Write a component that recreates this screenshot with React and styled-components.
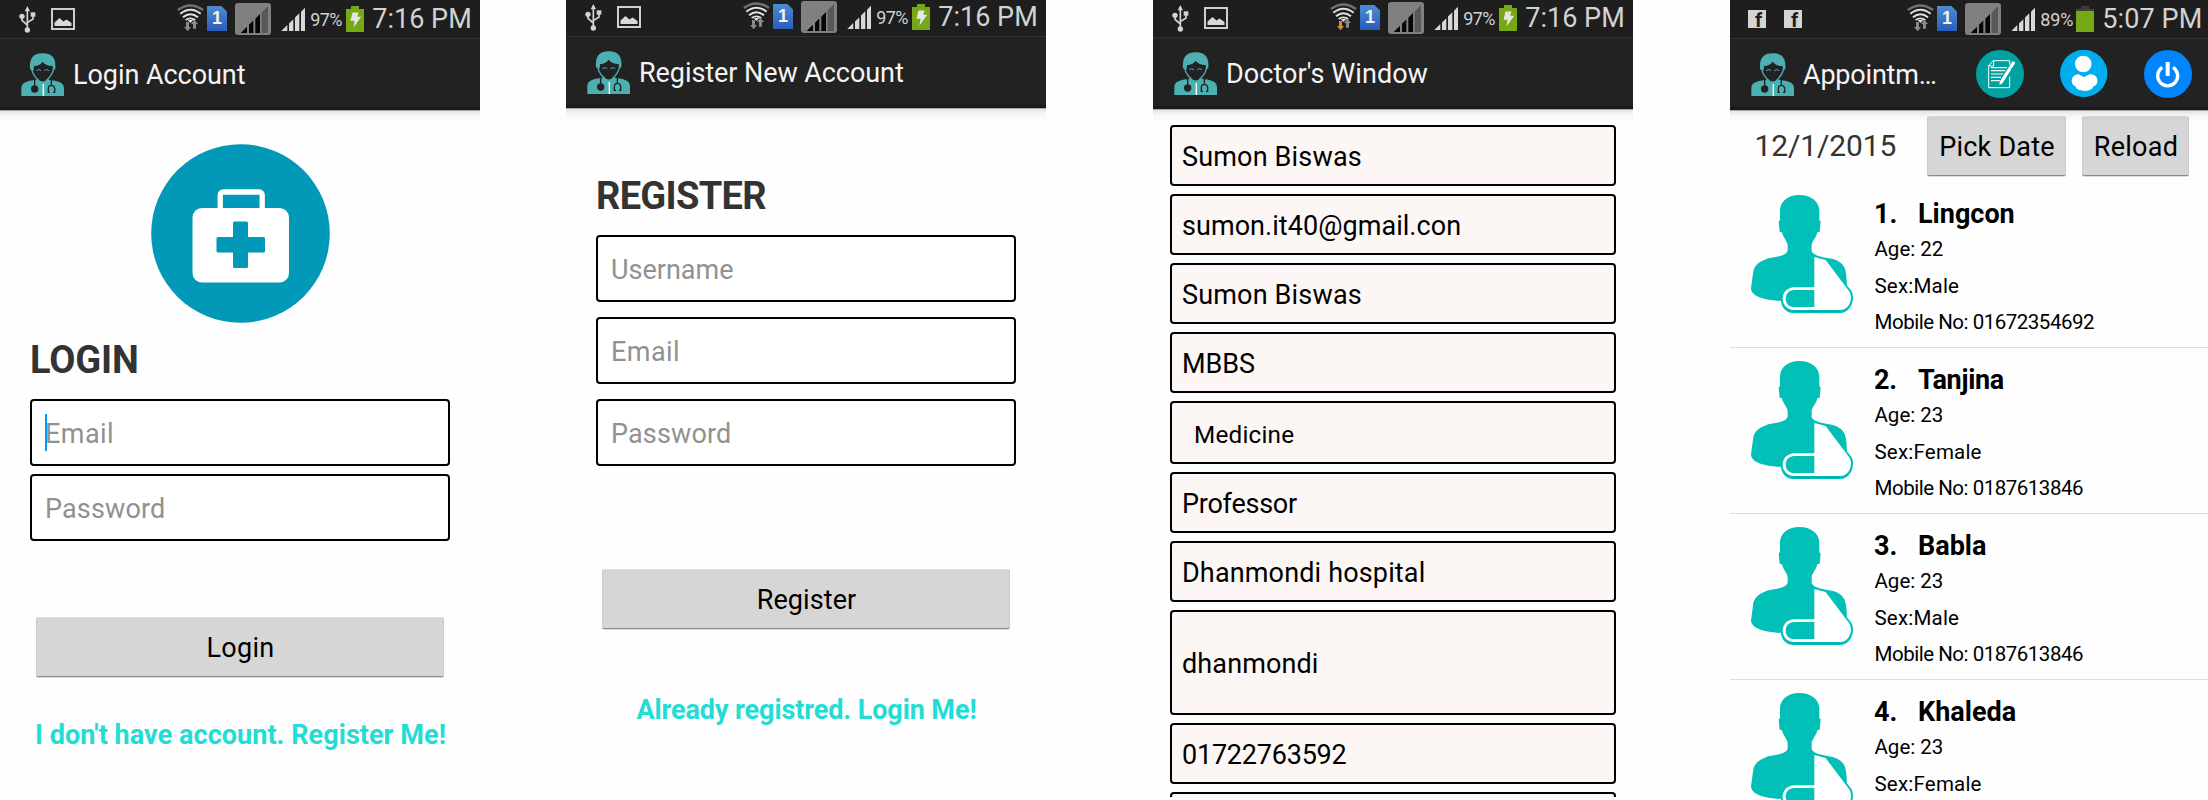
import React from 'react';
import styled, { createGlobalStyle } from 'styled-components';

const GlobalStyle = createGlobalStyle`
  body {
    margin: 0;
    background: #fefefe;
    font-family: Roboto, "Liberation Sans", sans-serif;
    color: #000;
  }
  * { box-sizing: border-box; }
`;

const Board = styled.main`
  display: grid;
  grid-template-columns: 480px 86px 480px 107px 480px 97px 478px;
  width: 2208px;
  height: 800px;
  overflow: hidden;
`;

const Screen = styled.section`
  grid-column: ${(p) => p.$column};
  height: ${(p) => p.$height || 800}px;
  overflow: hidden;
  background: #fefefe;
`;

const Header = styled.header`
  position: relative;
  z-index: 1;
  width: 480px;
  height: 110px;
  margin-top: ${(p) => -(p.$crop || 0)}px;
  background: #222;
  color: #f4f4f4;

  &::after {
    content: "";
    position: absolute;
    top: 100%;
    left: 0;
    right: 0;
    height: 13px;
    background: linear-gradient(#a8a8a8 0 1px, rgba(0, 0, 0, 0.1) 1px, rgba(0, 0, 0, 0.03) 6px, transparent);
  }
`;

const StatusBar = styled.div`
  display: flex;
  align-items: flex-start;
  height: 39px;
  padding-left: 19px;
  background: #1e1e1e;
  border-bottom: 1px solid #303030;
`;

const Notices = styled.div`
  display: flex;
  width: 158px;
`;

const Glyph = styled.svg`
  display: block;
  flex: none;
  margin-left: ${(p) => p.$gap || 0}px;
  margin-top: ${(p) => p.$top || 0}px;
`;

const SimBadge = styled.span`
  width: 20px;
  height: 25px;
  margin: 6px 0 0 3px;
  background: linear-gradient(#4b8dd0, #2b5cba);
  clip-path: polygon(0 0, 72% 0, 100% 22%, 100% 100%, 0 100%);
  color: #f2f2f2;
  font: bold 18px/25px "Liberation Sans", sans-serif;
  text-align: center;
`;

const Percent = styled.span`
  width: 36px;
  margin-left: 5px;
  color: #d2d2d2;
  font-size: 18px;
  line-height: 40px;
  letter-spacing: ${(p) => p.$ls}px;
`;

const Clock = styled.span`
  margin-left: 8px;
  color: #d2d2d2;
  font-size: 27px;
  line-height: 38px;
  white-space: nowrap;
  letter-spacing: ${(p) => p.$ls}px;
`;

const FacebookNotice = styled.span`
  width: 18px;
  height: 18px;
  margin: 10px 18px 0 0;
  background: #d4d4d4;
  color: #1e1e1e;
  font: bold 20px/20px Roboto, "Liberation Sans", sans-serif;
  text-align: center;
  padding-left: 3px;

  &:first-child { margin-left: -1px; }
`;

const AppBar = styled.div`
  display: flex;
  align-items: center;
  height: 71px;
  padding: 0 0 0 21.3px;
  border-bottom: 3px solid #1a1a1a;
`;

const Title = styled.h1`
  margin: 3px 0 0 8.2px;
  font-size: 27px;
  font-weight: 400;
  line-height: 32px;
  white-space: nowrap;
  letter-spacing: ${(p) => p.$ls || 0}px;
`;

const Actions = styled.nav`
  display: flex;
  gap: 36px;
  margin: 2px 0 0 auto;
  padding-right: 18.5px;
`;

const Form = styled.form`
  display: flex;
  flex-direction: column;
  align-items: stretch;
  padding: ${(p) => p.$top}px 30px 0;
`;

const Logo = styled.svg`
  width: 179px;
  height: 179px;
  margin: 0 0 14px 120.5px;
`;

const Heading = styled.h2`
  margin: 0 0 16px;
  color: #333;
  font-size: 38px;
  font-weight: 700;
  line-height: 46px;
  letter-spacing: ${(p) => p.$ls}px;
`;

const Inputs = styled.div`
  display: grid;
  gap: ${(p) => p.$gap}px;
`;

const Input = styled.div`
  display: flex;
  align-items: center;
  height: 67px;
  padding: 3px 13px 0;
  border: 2px solid #000;
  border-radius: 4px;
  background: #fff;
  color: #919191;
  font-size: 27px;
  letter-spacing: ${(p) => p.$ls || 0}px;
`;

const Caret = styled.i`
  width: 2px;
  height: 37px;
  margin: -3px -2px 0 0;
  background: #0097ff;
`;

const Button = styled.button`
  height: 60px;
  margin: ${(p) => p.$margin || 0};
  padding: 1px 0 0 1px;
  width: ${(p) => p.$width || 'auto'};
  border: 1px solid #cacaca;
  border-top-color: #e0e0e0;
  border-bottom: 1px solid #8a8a8a;
  border-radius: 2px;
  background: #d6d6d6;
  box-shadow: 0 1px 0 #ddd;
  color: #000;
  font: 400 27px Roboto, "Liberation Sans", sans-serif;
  letter-spacing: ${(p) => p.$ls || 0}px;
`;

const Link = styled.a`
  margin-top: ${(p) => p.$top}px;
  margin-left: -9px;
  margin-right: -10px;
  color: #22dcd5;
  font-size: 27px;
  font-weight: 700;
  line-height: 32px;
  text-align: center;
  white-space: nowrap;
  letter-spacing: ${(p) => p.$ls}px;
`;

const Profile = styled.div`
  display: grid;
  gap: 8px;
  padding: 16px 17px 0;
`;

const Field = styled.div`
  display: flex;
  align-items: center;
  height: ${(p) => p.$height || 61}px;
  padding: 3px 0 0 ${(p) => (p.$small ? 22 : 10)}px;
  border: 2px solid #000;
  border-radius: 4px;
  background: #fcf6f4;
  font-size: ${(p) => (p.$small ? 24.3 : 27)}px;
  letter-spacing: ${(p) => p.$ls || 0}px;
`;

const DateBar = styled.div`
  display: flex;
  height: 72px;
  padding: 6px 0 0 24.5px;
`;

const DateText = styled.span`
  width: 172.5px;
  color: #333;
  font-size: 30px;
  line-height: 60px;
  letter-spacing: -0.1px;
`;

const Row = styled.article`
  display: flex;
  height: 166px;
  padding: 13px 0 0 21px;
  border-bottom: 1px solid #dedede;
`;

const Details = styled.div`
  margin: 3px 0 0 21px;
`;

const Name = styled.h3`
  display: flex;
  margin: 0 0 1px;
  font-size: 27px;
  font-weight: 700;
  line-height: 32px;
  letter-spacing: ${(p) => p.$ls || 0}px;
`;

const Index = styled.span`
  width: 44px;
`;

const Detail = styled.p`
  margin: 0 0 0 0.5px;
  font-size: 20.5px;
  line-height: 36.5px;
  white-space: nowrap;
  letter-spacing: ${(p) => p.$ls || 0}px;
`;

const UsbIcon = () => (
  <Glyph width="17" height="27" viewBox="57 17 51 81" $top={5.7} fill="#d4d4d4">
    <path d="M82 17l-8 16h16z" />
    <path d="M82 30v58M66 50v10l16 14M99 46v10L82 67" fill="none" stroke="#d4d4d4" strokeWidth="5" />
    <circle cx="82" cy="89" r="8" />
    <circle cx="66" cy="48" r="8" />
    <path d="M92 36h14v13H92z" />
  </Glyph>
);

const PictureIcon = () => (
  <Glyph width="24" height="22" viewBox="0 0 24 22" $gap={15} $top={8}>
    <path d="M1 1h22v20H1z" fill="none" stroke="#cfcfcf" strokeWidth="2" />
    <path d="M3.5 18v-3.500l5-4.500 4 3.500 3-2 5 3.500v3z" fill="#d8d8d8" />
  </Glyph>
);

const WifiIcon = ({ down = '#8a8a8a' }) => (
  <Glyph width="27" height="28.700" viewBox="531 10 81 86" $top={3.3}>
    <g fill="none" stroke="#e2e2e2" strokeWidth="6">
      <path d="M534 31Q571 4 609 31" stroke="#727272" strokeWidth="8" />
      <path d="M541 42Q571 18 602 42" />
      <path d="M549 53Q571 34 594 53" />
      <path d="M557 61Q571 51 586 61" strokeWidth="5" />
    </g>
    <path d="M563 61h17l-9 9z" fill="#e2e2e2" />
    <path d="M558 67h9v15h6l-10 13-11-13h6z" fill={down} />
    <path d="M579 87h9V73h6l-11-13-10 13h6z" fill="#8a8a8a" />
  </Glyph>
);

const slantedBar = (x1, x2, left, base, slope) =>
  `${x1},${base} ${x1},${base - (x1 - left) * slope} ${x2},${base - (x2 - left) * slope} ${x2},${base}`;

const DimSignalIcon = () => (
  <Glyph width="36" height="32" viewBox="705 9 108 96" $gap={8} $top={3}>
    <rect x="705" y="9" width="108" height="96" rx="9" fill="#808080" />
    <polygon points={slantedBar(785, 804, 722, 99, 0.98)} fill="#585858" />
    {[[722, 741], [747, 760], [766, 780]].map(([a, b]) => (
      <polygon key={a} points={slantedBar(a, b, 722, 99, 0.98)} fill="#060606" />
    ))}
  </Glyph>
);

const SignalIcon = () => (
  <Glyph width="24.500" height="24" viewBox="842 22 73.500 72" $gap={9.7} $top={7.3}>
    {[[843, 861], [866, 879], [884, 897], [902, 915]].map(([a, b]) => (
      <polygon key={a} points={slantedBar(a, b, 843, 94, 0.98)} fill="#d8d8d8" />
    ))}
  </Glyph>
);

const BatteryIcon = ({ charging }) => (
  <Glyph width="18" height="26" viewBox="0 0 18 26" $top={6}>
    <path d="M5 0h8v3H5z" fill={charging ? '#76a818' : '#3c3c3c'} />
    <path d="M0 3h18v23H0z" fill="#76a818" />
    {!charging && <path d="M0 3h18v2H0z" fill="#3c4a20" />}
    {charging && <path d="M6.500 6.500h6l-1.300 4.300h4L7.500 21.500l1-6.700H4.500z" fill="#e6e6e6" />}
  </Glyph>
);

const DoctorIcon = () => (
  <Glyph width="43.500" height="43.500" viewBox="64 156 130.500 130.500" $top={2.5} fill="#4cafb2">
    <path d="M91 205C89 173 99 157 129 157S170 173 167 205l-7 3-1-13c-14 0-23-4-30-13-7 9-13 12-26 13l-1 14z" />
    <path d="M96 203c2 16 10 26 22 36M162 203c-3 16-11 26-22 36" fill="none" stroke="#4cafb2" strokeWidth="4" />
    <path d="M110 209q7-7 14 0M134 209q7-7 14 0" fill="none" stroke="#4cafb2" strokeWidth="3" />
    <path d="M65 285v-23c0-16 16-22 38-24l12-3q14 13 28 0l12 3c22 2 38 8 38 24v23z" />
    <path d="M131 249v36" stroke="#fff" strokeWidth="4" />
    <circle cx="105" cy="264" r="11" fill="#222" />
    <g fill="none" stroke="#222" strokeWidth="4">
      <path d="M105 237v18M155 237v14" />
      <path d="M151 274h-5v-11q0-10 9-10t10 10v11h-5" />
    </g>
  </Glyph>
);

const NotesAction = () => (
  <Glyph width="48" height="48" viewBox="33 18 144 144">
    <circle cx="105" cy="90" r="72" fill="#00a1a1" />
    <path d="M134 62V50H85L71 65v66h63V98" fill="none" stroke="#fff" strokeWidth="3" />
    <path d="M71 66h15V50" fill="none" stroke="#fff" strokeWidth="3" />
    <path d="M78 71h48M78 80h43M78 90h37M78 100h30M78 110h26" stroke="#fff" strokeWidth="3.500" />
    <path d="M143 51l8 5-38 61-10 7 2-12z" fill="#fff" />
    <path d="M135 73l6 4" stroke="#00a1a1" strokeWidth="2" />
  </Glyph>
);

const UserAction = () => (
  <Glyph width="47.500" height="48" viewBox="285 18 142 144">
    <circle cx="356" cy="88.500" r="71" fill="#00aeef" />
    <circle cx="354.500" cy="60" r="25" fill="#fff" />
    <path d="M340 91l17 8 16-8c16 0 24 8 24 19 0 10-5 15-12 17-3 10-14 14-27 14s-24-4-27-14c-7-2-11-8-11-16 0-12 8-19 20-20z" fill="#fff" />
    <path d="M349 90l7 9 7-9z" fill="#00aeef" />
  </Glyph>
);

const PowerAction = () => (
  <Glyph width="48" height="48" viewBox="537 18 144 144">
    <circle cx="609" cy="90" r="72" fill="#0085ff" />
    <path d="M592 70a30 30 0 1 0 32 0" fill="none" stroke="#fff" strokeWidth="10" />
    <path d="M608 54v42" stroke="#fff" strokeWidth="12" />
  </Glyph>
);

const MedicalLogo = () => (
  <Logo viewBox="0 0 179 179">
    <circle cx="89.500" cy="89.500" r="89.300" fill="#0298b8" />
    <rect x="69.200" y="48" width="42" height="28" rx="3" fill="none" stroke="#fff" strokeWidth="5.300" />
    <rect x="41.500" y="64" width="96.500" height="74.500" rx="9.500" fill="#fff" />
    <path d="M83.500 77.500h12q1.500 0 1.500 1.500v14h15.500q1.500 0 1.500 1.500v12.500q0 1.500-1.500 1.500H97v14q0 1.500-1.500 1.500h-12q-1.500 0-1.500-1.500v-14H67q-1.500 0-1.500-1.500V94.500q0-1.500 1.500-1.500h15V79q0-1.500 1.500-1.500z" fill="#0298b8" />
  </Logo>
);

const PatientIcon = () => (
  <Glyph width="102" height="118" viewBox="123 45 306 354" fill="#02bfb8">
    <path d="M268 45c-34 0-57 18-58 46v30l-4 3 3 31 7 2c3 16 17 28 17 39v15c-3 22-50 18-70 29-21 8-30 20-33 34l-7 51c0 22 34 36 92 38l196-20v-22c-1-35-3-49-9-61-9-15-26-23-50-26-18-3-41-7-47-20v-18c0-11 14-23 17-39l7-2 3-31-4-3V91c-1-28-26-46-60-46z" />
    <path d="M348 240l76 92c7 12 7 34-3 49-8 12-19 18-31 18H250c-25 0-39-23-37-42l40-40z" />
    <path d="M313 231l34 9 70 93c8 12 8 28 0 41-8 12-17 16-29 16H252c-21 0-34-17-34-33 0-20 15-35 34-35h61z" fill="#fff" />
    <path d="M313 330h-60c-16 0-26 12-26 26s10 25 26 25h60z" />
    <path d="M250 394h140" stroke="#0a8f8a" strokeWidth="2" />
  </Glyph>
);

const PhoneHeader = ({ title, ls, crop, down, notices, percent = '97%', percentLs = -0.62, time = '7:16 PM', timeLs = 0.03, charging = true, actions }) => (
  <Header $crop={crop}>
    <StatusBar>
      <Notices>{notices || (<><UsbIcon /><PictureIcon /></>)}</Notices>
      <WifiIcon down={down} />
      <SimBadge>1</SimBadge>
      <DimSignalIcon />
      <SignalIcon />
      <Percent $ls={percentLs}>{percent}</Percent>
      <BatteryIcon charging={charging} />
      <Clock $ls={timeLs}>{time}</Clock>
    </StatusBar>
    <AppBar>
      <DoctorIcon />
      <Title $ls={ls}>{title}</Title>
      {actions}
    </AppBar>
  </Header>
);

const profile = [
  { text: 'Sumon Biswas', ls: 0.17 },
  { text: 'sumon.it40@gmail.con', ls: 0.05 },
  { text: 'Sumon Biswas', ls: 0.17 },
  { text: 'MBBS', ls: -0.1 },
  { text: 'Medicine', height: 63, small: true, ls: 0.2 },
  { text: 'Professor', ls: -0.25 },
  { text: 'Dhanmondi hospital', ls: 0.15 },
  { text: 'dhanmondi', ls: 0.12, height: 105 },
  { text: '01722763592', ls: -0.22 },
  { text: '' },
];

const patients = [
  { name: 'Lingcon', age: 22, sex: 'Male', mobile: '01672354692' },
  { name: 'Tanjina', age: 23, sex: 'Female', mobile: '0187613846', ls: -0.3 },
  { name: 'Babla', age: 23, sex: 'Male', mobile: '0187613846' },
  { name: 'Khaleda', age: 23, sex: 'Female' },
];

export default function App() {
  return (
    <>
      <GlobalStyle />
      <Board>
        <Screen $column={1}>
          <PhoneHeader title="Login Account" ls={-0.05} />
          <Form $top={34}>
            <MedicalLogo />
            <Heading $ls={-0.15}>LOGIN</Heading>
            <Inputs $gap={8}>
              <Input $ls={0.43}><Caret />Email</Input>
              <Input $ls={0.14}>Password</Input>
            </Inputs>
            <Button type="button" $margin="76px 6px 0" $ls={0.3}>Login</Button>
            <Link $top={42} $ls={0.05}>I don't have account. Register Me!</Link>
          </Form>
        </Screen>

        <Screen $column={3}>
          <PhoneHeader title="Register New Account" ls={-0.07} crop={2} />
          <Form $top={65}>
            <Heading $ls={-0.68}>REGISTER</Heading>
            <Inputs $gap={15}>
              <Input>Username</Input>
              <Input $ls={0.43}>Email</Input>
              <Input $ls={0.14}>Password</Input>
            </Inputs>
            <Button type="button" $margin="103px 6px 0" $ls={0.1}>Register</Button>
            <Link $top={65} $ls={-0.1}>Already registred. Login Me!</Link>
          </Form>
        </Screen>

        <Screen $column={5} $height={797}>
          <PhoneHeader title="Doctor's Window" ls={0.05} crop={1} down="#d98a2b" />
          <Profile>
            {profile.map((f, i) => (
              <Field key={i} $ls={f.ls} $height={f.height} $small={f.small}>{f.text}</Field>
            ))}
          </Profile>
        </Screen>

        <Screen $column={7}>
          <PhoneHeader
            title="Appointm…"
            ls={-0.2}
            percent="89%"
            percentLs={-0.12}
            time="5:07 PM"
            timeLs={0.12}
            charging={false}
            notices={<><FacebookNotice>f</FacebookNotice><FacebookNotice>f</FacebookNotice></>}
            actions={<Actions><NotesAction /><UserAction /><PowerAction /></Actions>}
          />
          <DateBar>
            <DateText>12/1/2015</DateText>
            <Button type="button" $width="139px" $ls={0.21}>Pick Date</Button>
            <Button type="button" $width="107px" $margin="0 0 0 16px" $ls={0.28}>Reload</Button>
          </DateBar>
          {patients.map((p, i) => (
            <Row key={p.name}>
              <PatientIcon />
              <Details>
                <Name $ls={p.ls}><Index>{i + 1}.</Index>{p.name}</Name>
                <Detail>Age: {p.age}</Detail>
                <Detail $ls={0.2}>Sex:{p.sex}</Detail>
                {p.mobile && <Detail $ls={-0.48}>Mobile No: {p.mobile}</Detail>}
              </Details>
            </Row>
          ))}
        </Screen>
      </Board>
    </>
  );
}
